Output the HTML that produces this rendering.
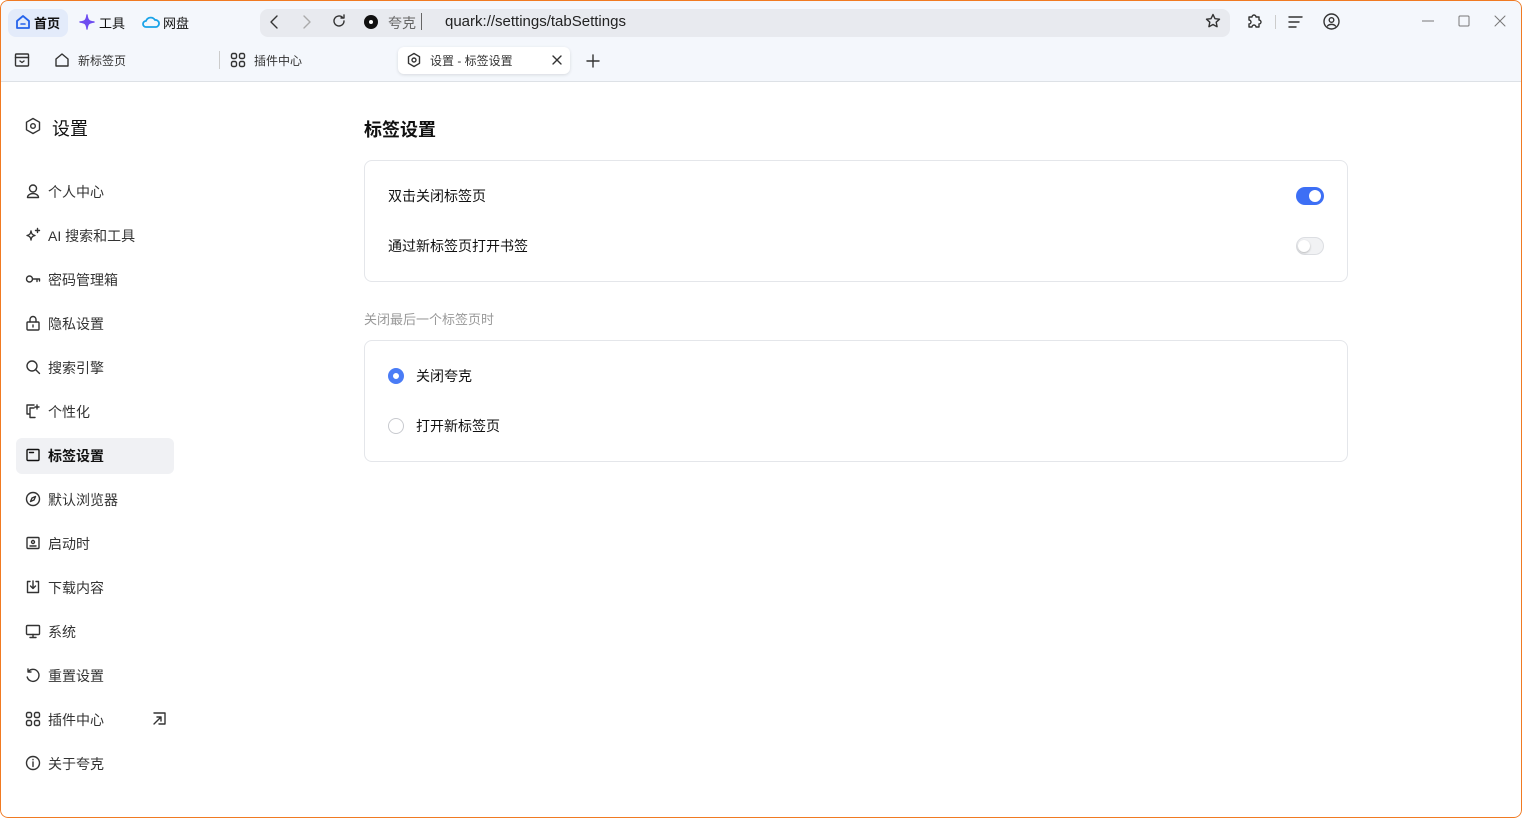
<!DOCTYPE html><html><head><meta charset="utf-8"><style>
*{margin:0;padding:0;box-sizing:border-box}
body{width:1522px;height:818px;overflow:hidden;background:#fff;font-family:"Liberation Sans","Noto Sans CJK SC",sans-serif;color:#1f2329}
.win{position:absolute;left:0;top:0;width:1522px;height:818px;border-radius:8px;overflow:hidden;background:#fff}
.bd{position:absolute;left:0;top:0;width:1522px;height:818px;border:1px solid #f07a22;border-radius:8px;z-index:9;pointer-events:none}
.top{position:absolute;left:0;top:0;width:1522px;height:82px;background:#f4f7fc;border-bottom:1px solid #dde1e6}
.a{position:absolute}
svg{position:absolute;fill:none;stroke:#333;stroke-width:1.4;stroke-linecap:round;stroke-linejoin:round}
.t13{font-size:13px}
.side{font-size:14px;color:#333}
.side div{position:absolute;left:48px}
.card{position:absolute;left:364px;width:984px;height:122px;border:1px solid #e4e6ea;border-radius:8px}
</style></head><body><div class="win">
<div class="top">
<div class="a" style="left:8px;top:9px;width:60px;height:28px;background:#e3ebfa;border-radius:8px"></div>
<svg style="left:15px;top:14px" width="16" height="16" viewBox="0 0 16 16"><path d="M2 7L8 2l6 5v7H2z" stroke="#2563eb" stroke-width="1.8"/><path d="M6 10h4" stroke="#2563eb" stroke-width="1.6"/></svg>
<div class="a t13" style="left:34px;top:13px;font-weight:bold;color:#111">首页</div>
<svg style="left:79px;top:14px" width="16" height="16" viewBox="0 0 16 16"><path d="M8 1C8.5 6 10 7.5 15 8 10 8.5 8.5 10 8 15 7.5 10 6 8.5 1 8 6 7.5 7.5 6 8 1z" fill="#6d4cf0" stroke="#6d4cf0"/></svg>
<div class="a t13" style="left:99px;top:13px;color:#111">工具</div>
<svg style="left:142px;top:14px" width="18" height="16" viewBox="0 0 18 16"><path d="M4 13a3 3 0 010-6 5 5 0 019-1 3.5 3.5 0 011 7z" stroke="#1aa3e8" stroke-width="1.8"/></svg>
<div class="a t13" style="left:163px;top:13px;color:#111">网盘</div>
<div class="a" style="left:260px;top:9px;width:970px;height:28px;background:#e8eaef;border-radius:8px"></div>
<svg style="left:268px;top:14px" width="14" height="16" viewBox="0 0 14 16"><path d="M9 2L3 8l6 6"/></svg>
<svg style="left:299px;top:14px" width="14" height="16" viewBox="0 0 14 16"><path d="M5 2l6 6-6 6" stroke="#aaa"/></svg>
<svg style="left:331px;top:13px" width="16" height="16" viewBox="0 0 16 16"><path d="M13 8a5 5 0 11-1.5-3.6M13 2v3h-3"/></svg>
<div class="a" style="left:364px;top:15px;width:14px;height:14px;border-radius:50%;background:#111"></div>
<div class="a" style="left:369px;top:20px;width:4px;height:4px;border-radius:50%;background:#fff"></div>
<div class="a" style="left:388px;top:13px;font-size:14px;color:#666">夸克</div>
<div class="a" style="left:421px;top:13px;width:1px;height:17px;background:#666"></div>
<div class="a" style="left:445px;top:13px;font-size:15px;color:#222">quark://settings/tabSettings</div>
<svg style="left:1205px;top:13px" width="16" height="16" viewBox="0 0 16 16"><path d="M8 1.5l2 4.2 4.5.5-3.3 3 .9 4.5L8 11.5l-4.1 2.2.9-4.5-3.3-3 4.5-.5z"/></svg>
<svg style="left:1246px;top:12px" width="18" height="18" viewBox="0 0 18 18"><path d="M3 5h3a2 2 0 114 0h3v3a2 2 0 110 4v3h-3a2 2 0 10-4 0H3v-3a2 2 0 100-4z"/></svg>
<div class="a" style="left:1275px;top:15px;width:1px;height:14px;background:#ccc"></div>
<svg style="left:1288px;top:14px" width="16" height="16" viewBox="0 0 16 16"><path d="M1 3h13M1 8h10M1 13h7"/></svg>
<svg style="left:1323px;top:13px" width="17" height="17" viewBox="0 0 17 17"><circle cx="8.5" cy="8.5" r="7.5"/><circle cx="8.5" cy="7" r="2.3"/><path d="M4.5 13a4.5 3 0 018 0"/></svg>
<svg style="left:1422px;top:15px" width="12" height="12" viewBox="0 0 12 12"><path d="M0 6h12" stroke="#777" stroke-width="1"/></svg>
<svg style="left:1458px;top:15px" width="12" height="12" viewBox="0 0 12 12"><rect x="1" y="1" width="10" height="10" rx="1" stroke="#777" stroke-width="1"/></svg>
<svg style="left:1494px;top:15px" width="12" height="12" viewBox="0 0 12 12"><path d="M1 1l10 10M11 1L1 11" stroke="#777" stroke-width="1"/></svg>
<svg style="left:14px;top:53px" width="16" height="14" viewBox="0 0 16 14"><rect x="1.5" y="1" width="13" height="12" rx="1"/><path d="M1.5 4.5h13M6 8l2 1.5L10 8"/></svg>
<svg style="left:54px;top:52px" width="16" height="16" viewBox="0 0 16 16"><path d="M2 7L8 2l6 5v7H2z"/></svg>
<div class="a" style="left:78px;top:52px;font-size:12px;color:#333">新标签页</div>
<div class="a" style="left:219px;top:51px;width:1px;height:18px;background:#ccc"></div>
<svg style="left:230px;top:52px" width="16" height="16" viewBox="0 0 16 16"><rect x="1.5" y="1.5" width="5" height="5" rx="1.5"/><rect x="9.5" y="1.5" width="5" height="5" rx="1.5"/><rect x="1.5" y="9.5" width="5" height="5" rx="1.5"/><rect x="9.5" y="9.5" width="5" height="5" rx="1.5"/></svg>
<div class="a" style="left:254px;top:52px;font-size:12px;color:#333">插件中心</div>
<div class="a" style="left:398px;top:47px;width:172px;height:27px;background:#fff;border-radius:6px;box-shadow:0 1px 3px rgba(0,0,0,.12)"></div>
<svg style="left:406px;top:52px" width="16" height="16" viewBox="0 0 16 16"><path d="M8 1.5l5.5 3.2v6.6L8 14.5l-5.5-3.2V4.7z"/><circle cx="8" cy="8" r="2"/></svg>
<div class="a" style="left:430px;top:52px;font-size:12px;color:#333">设置 - 标签设置</div>
<svg style="left:552px;top:55px" width="10" height="10" viewBox="0 0 10 10"><path d="M1 1l8 8M9 1L1 9"/></svg>
<svg style="left:586px;top:54px" width="14" height="14" viewBox="0 0 14 14"><path d="M7 1v12M1 7h12"/></svg>
</div>
<svg style="left:24px;top:117px" width="18" height="18" viewBox="0 0 18 18"><path d="M9 1.5l6.5 3.7v7.6L9 16.5l-6.5-3.7V5.2z"/><circle cx="9" cy="9" r="2.3"/></svg>
<div class="a" style="left:52px;top:115px;font-size:18px;color:#111">设置</div>
<div class="a" style="left:16px;top:438px;width:158px;height:36px;background:#f0f1f4;border-radius:6px"></div>
<div class="side">
<div style="top:182px">个人中心</div><div style="top:226px">AI 搜索和工具</div><div style="top:270px">密码管理箱</div><div style="top:314px">隐私设置</div><div style="top:358px">搜索引擎</div><div style="top:402px">个性化</div><div style="top:446px;font-weight:bold;color:#111">标签设置</div><div style="top:490px">默认浏览器</div><div style="top:534px">启动时</div><div style="top:578px">下载内容</div><div style="top:622px">系统</div><div style="top:666px">重置设置</div><div style="top:710px">插件中心</div><div style="top:754px">关于夸克</div>
</div>
<svg style="left:25px;top:183px" width="16" height="16" viewBox="0 0 16 16"><circle cx="8" cy="5.5" r="3.5"/><path d="M2.5 14.5a5.5 4 0 0111 0z"/></svg>
<svg style="left:25px;top:227px" width="16" height="16" viewBox="0 0 16 16"><path d="M6 4c.4 3 1.5 4 4 4.5-2.5.5-3.6 1.5-4 4.5-.4-3-1.5-4-4-4.5C4.5 8 5.6 7 6 4zM12.5 1.5v4M10.5 3.5h4"/></svg>
<svg style="left:25px;top:271px" width="16" height="16" viewBox="0 0 16 16"><circle cx="4.5" cy="8" r="3"/><path d="M7.5 8h7M12 8v2.5M14.5 8v2"/></svg>
<svg style="left:25px;top:315px" width="16" height="16" viewBox="0 0 16 16"><rect x="2" y="7" width="12" height="8" rx="1"/><path d="M5 7V4.5a3 3 0 016 0V7M8 10v2"/></svg>
<svg style="left:25px;top:359px" width="16" height="16" viewBox="0 0 16 16"><circle cx="7" cy="7" r="5"/><path d="M10.5 10.5L14.5 14.5"/></svg>
<svg style="left:25px;top:403px" width="16" height="16" viewBox="0 0 16 16"><path d="M9 2H2v9h3v3.5h5M12 2v4M10 4h4M5 11V5h4"/></svg>
<svg style="left:25px;top:447px;stroke:#111" width="16" height="16" viewBox="0 0 16 16"><rect x="2" y="2.5" width="12" height="11" rx="1"/><path d="M4.5 5.5h4"/></svg>
<svg style="left:25px;top:491px" width="16" height="16" viewBox="0 0 16 16"><circle cx="8" cy="8" r="6.5"/><path d="M10.5 5.5L9 9 5.5 10.5 7 7z"/></svg>
<svg style="left:25px;top:535px" width="16" height="16" viewBox="0 0 16 16"><rect x="2" y="2.5" width="12" height="11" rx="1"/><circle cx="8" cy="7" r="1.5"/><path d="M5 11h6"/></svg>
<svg style="left:25px;top:579px" width="16" height="16" viewBox="0 0 16 16"><path d="M5 2.5H2.5v11h11v-11H11M8 2v7M5.5 7L8 9.5 10.5 7"/></svg>
<svg style="left:25px;top:623px" width="16" height="16" viewBox="0 0 16 16"><rect x="1.5" y="2.5" width="13" height="9" rx="1"/><path d="M8 11.5v3M5 14.5h6"/></svg>
<svg style="left:25px;top:667px" width="16" height="16" viewBox="0 0 16 16"><path d="M3 5a6 6 0 11-.8 5M3 2v3h3"/></svg>
<svg style="left:25px;top:711px" width="16" height="16" viewBox="0 0 16 16"><rect x="1.5" y="1.5" width="5" height="5" rx="1.5"/><rect x="9.5" y="1.5" width="5" height="5" rx="1.5"/><rect x="1.5" y="9.5" width="5" height="5" rx="1.5"/><rect x="9.5" y="9.5" width="5" height="5" rx="1.5"/></svg>
<svg style="left:151px;top:711px" width="16" height="16" viewBox="0 0 16 16"><path d="M3 2h11v11H8M3 13l7-7M6 6h4v4"/></svg>
<svg style="left:25px;top:755px" width="16" height="16" viewBox="0 0 16 16"><circle cx="8" cy="8" r="6.5"/><path d="M8 7v4.5M8 4.5v.3"/></svg>
<div class="a" style="left:364px;top:116px;font-size:18px;font-weight:bold;color:#111">标签设置</div>
<div class="card" style="top:160px"></div>
<div class="a" style="left:388px;top:186px;font-size:14px;color:#111">双击关闭标签页</div>
<div class="a" style="left:388px;top:236px;font-size:14px;color:#111">通过新标签页打开书签</div>
<div class="a" style="left:1296px;top:187px;width:28px;height:18px;border-radius:9px;background:#3d6ff5"></div>
<div class="a" style="left:1309px;top:190px;width:12px;height:12px;border-radius:50%;background:#fff"></div>
<div class="a" style="left:1296px;top:237px;width:28px;height:18px;border-radius:9px;background:#f1f2f4;border:1px solid #dcdee2"></div>
<div class="a" style="left:1298px;top:240px;width:12px;height:12px;border-radius:50%;background:#fff;box-shadow:0 1px 2px rgba(0,0,0,.25)"></div>
<div class="a" style="left:364px;top:309px;font-size:13px;color:#999">关闭最后一个标签页时</div>
<div class="card" style="top:340px"></div>
<div class="a" style="left:388px;top:368px;width:16px;height:16px;border-radius:50%;border:5px solid #4a7cf6;background:#fff"></div>
<div class="a" style="left:416px;top:366px;font-size:14px;color:#111">关闭夸克</div>
<div class="a" style="left:388px;top:418px;width:16px;height:16px;border-radius:50%;border:1px solid #c8cacf"></div>
<div class="a" style="left:416px;top:416px;font-size:14px;color:#111">打开新标签页</div>
<div class="bd"></div>
</div></body></html>
